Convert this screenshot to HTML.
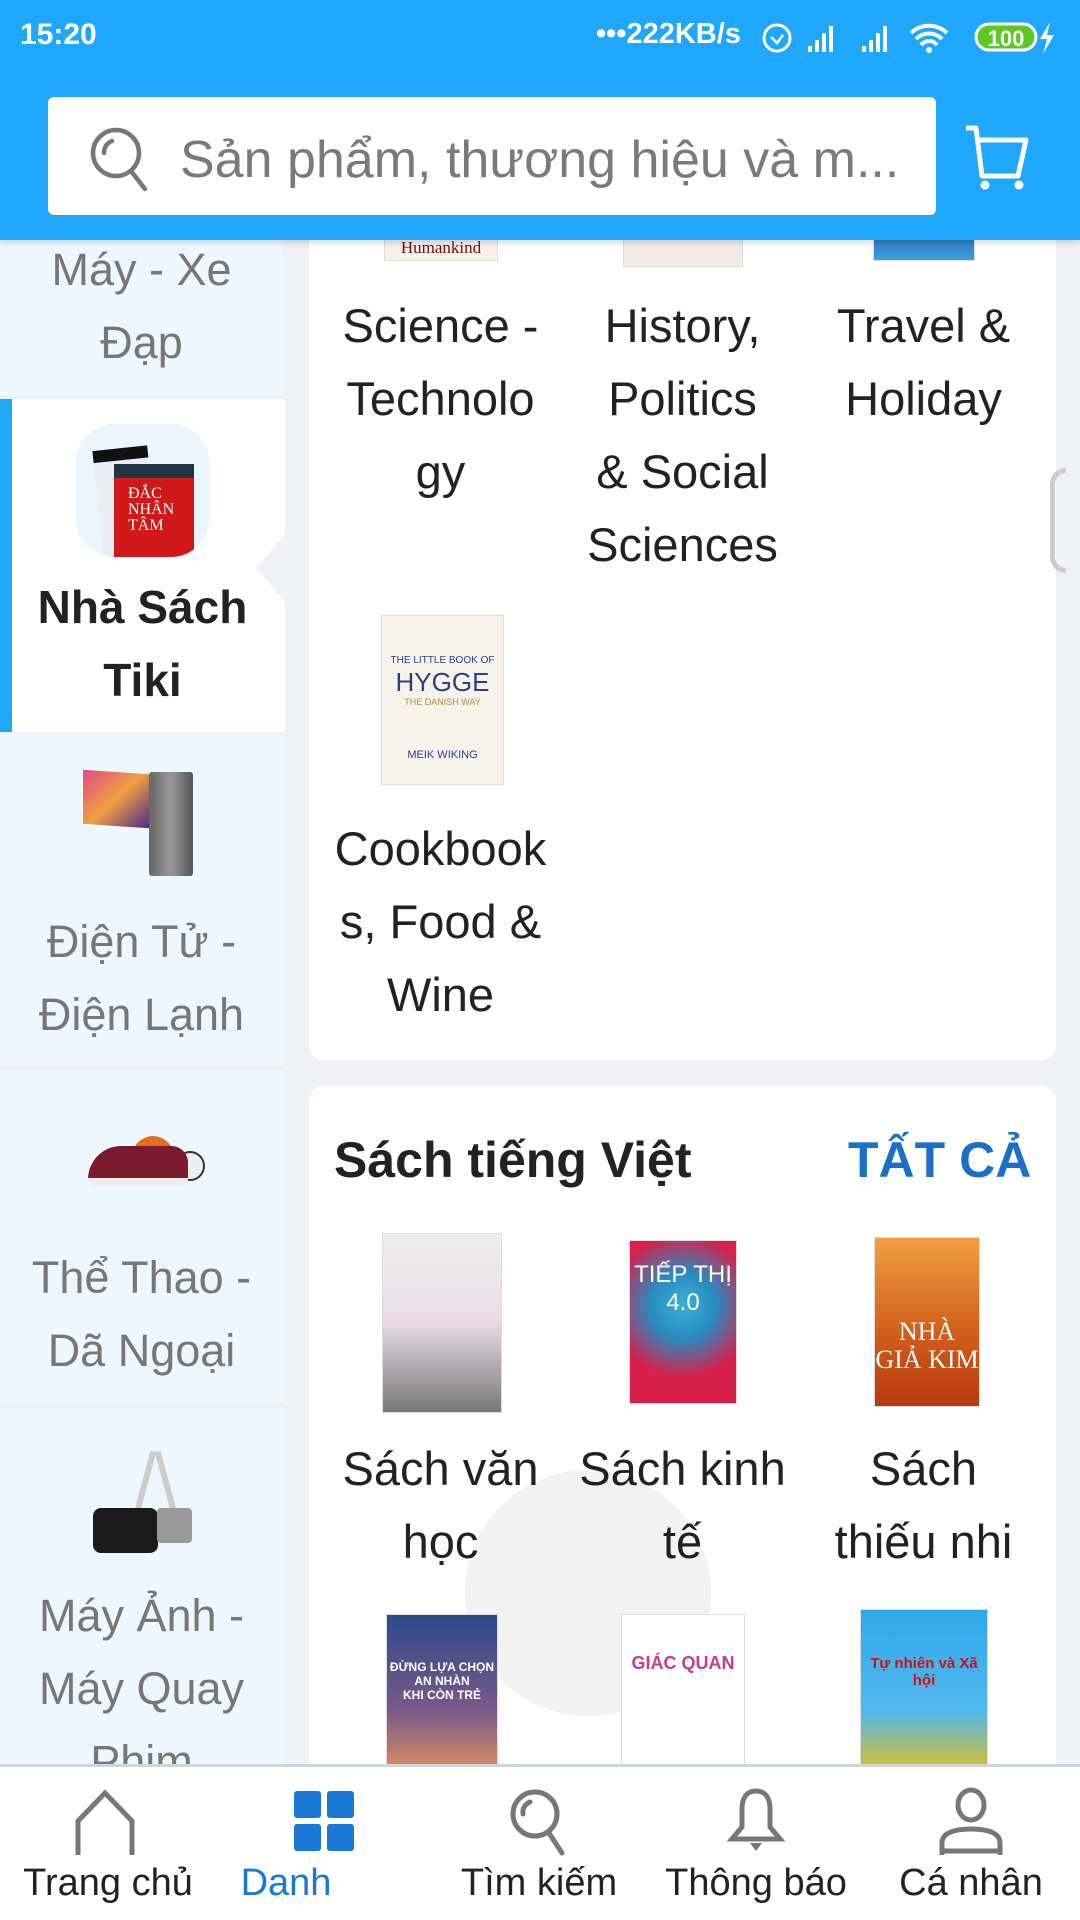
<!DOCTYPE html>
<html><head><meta charset="utf-8"><style>
*{margin:0;padding:0;box-sizing:border-box}
body{width:1080px;height:1920px;overflow:hidden;background:#f0f1f5;font-family:"Liberation Sans","Noto Sans CJK SC",sans-serif;position:relative}
.abs{position:absolute}
.side{position:absolute;left:0;width:283px;background:#edf7ff;border-bottom:3px solid #eceff2;text-align:center;color:#777;font-size:45px;line-height:73px}
.lbl{position:absolute;width:241px;text-align:center;color:#222;font-size:47px;line-height:73px}
.book{position:absolute;box-shadow:0 0 0 1px #ddd;overflow:hidden}
.nav{position:absolute;top:1862px;font-size:38px;color:#222;text-align:center;width:200px}
</style></head><body>
<!-- right content -->
<div class="abs" style="left:309px;top:200px;width:747px;height:860px;background:#fff;border-radius:0 0 14px 14px"></div>
<div class="book" style="left:385px;top:220px;width:112px;height:40px;background:#f6f1ea;font-family:'Liberation Serif';color:#6a1010;font-size:17px;text-align:center;line-height:55px">Humankind</div>
<div class="book" style="left:624px;top:220px;width:118px;height:46px;background:#f1ece4"></div>
<div class="book" style="left:874px;top:220px;width:100px;height:40px;background:linear-gradient(#2a5a9a,#3aa0e0)"></div>
<div class="lbl" style="left:320px;top:289px">Science -<br>Technolo<br>gy</div>
<div class="lbl" style="left:562px;top:289px">History,<br>Politics<br>&amp; Social<br>Sciences</div>
<div class="lbl" style="left:803px;top:289px">Travel &amp;<br>Holiday</div>
<div class="book" style="left:382px;top:616px;width:121px;height:168px;background:#f7f3ea;text-align:center;font-size:26px;color:#2a3f8a;padding-top:38px;line-height:28px"><div style="font-size:10px;line-height:14px">THE LITTLE BOOK OF</div>HYGGE<div style="font-size:9px;line-height:12px;color:#a89040">THE DANISH WAY</div><div style="margin-top:40px;font-size:11px;line-height:14px">MEIK WIKING</div></div>
<div class="lbl" style="left:320px;top:812px">Cookbook<br>s, Food &amp;<br>Wine</div>

<div class="abs" style="left:309px;top:1086px;width:747px;height:700px;background:#fff;border-radius:14px"></div>
<div class="abs" style="left:334px;top:1131px;font-size:50px;font-weight:bold;color:#222">Sách tiếng Việt</div>
<div class="abs" style="left:848px;top:1131px;font-size:50px;font-weight:bold;color:#1a6fc9">TẤT CẢ</div>
<div class="book" style="left:383px;top:1234px;width:118px;height:178px;background:linear-gradient(#eee 0%,#e8dce4 50%,#777 100%)"></div>
<div class="book" style="left:630px;top:1241px;width:106px;height:162px;background:radial-gradient(circle at 50% 40%,#3ab0d8 0%,#2a8ac0 30%,#d8204a 65%)"><div style="color:#fff;font-size:24px;text-align:center;margin-top:20px">TIẾP THỊ<br>4.0</div></div>
<div class="book" style="left:875px;top:1238px;width:104px;height:168px;background:linear-gradient(#f0a040,#d05a1a 60%,#b83a10);color:#fff;font-family:'Liberation Serif';text-align:center;font-size:26px;padding-top:80px;line-height:28px">NHÀ<br>GIẢ KIM</div>
<div class="lbl" style="left:320px;top:1432px">Sách văn<br>học</div>
<div class="lbl" style="left:562px;top:1432px">Sách kinh<br>tế</div>
<div class="lbl" style="left:803px;top:1432px">Sách<br>thiếu nhi</div>
<div class="abs" style="left:465px;top:1470px;width:246px;height:246px;border-radius:50%;background:rgba(0,0,0,0.05)"></div>
<div class="book" style="left:387px;top:1615px;width:110px;height:160px;background:linear-gradient(#2d4a8a,#7a5a8a 60%,#e0905a);color:#fff;font-size:12px;font-weight:bold;text-align:center;padding-top:45px">ĐỪNG LỰA CHỌN<br>AN NHÀN<br>KHI CÒN TRẺ</div>
<div class="book" style="left:622px;top:1615px;width:122px;height:160px;background:#fff;text-align:center;font-size:18px;color:#c83a8a;padding-top:38px;font-weight:bold">GIÁC QUAN</div>
<div class="book" style="left:861px;top:1610px;width:126px;height:165px;background:linear-gradient(#30a8e8,#50b8f0 60%,#e0c020);text-align:center;font-size:15px;color:#d01010;font-weight:bold;padding-top:45px">Tự nhiên và Xã hội</div>
<div class="abs" style="left:1050px;top:468px;width:16px;height:105px;border:5px solid #ccc;border-right:none;border-radius:16px 0 0 16px"></div>

<!-- sidebar -->
<div class="side" style="top:240px;height:159px"><div style="position:absolute;top:-7px;width:100%">Máy - Xe<br>Đạp</div></div>
<div class="abs" style="left:0;top:399px;width:285px;height:333px;background:#fff"></div>
<div class="abs" style="left:0;top:399px;width:12px;height:333px;background:#1ea7fd"></div>
<div class="abs" style="left:76px;top:424px;width:133px;height:133px;border-radius:38px;background:#eaf5ff;overflow:hidden">
 <div class="abs" style="left:22px;top:24px;width:55px;height:110px;background:#e8eef4;border-top:12px solid #111;transform:rotate(-6deg)"></div>
 <div class="abs" style="left:38px;top:40px;width:80px;height:100px;background:#d01818;border-top:14px solid #234"><div style="color:#fff;font-family:'Liberation Serif';font-size:16px;line-height:16px;padding:8px 0 0 14px">ĐẮC<br>NHÂN<br>TÂM</div></div>
</div>
<div class="abs" style="left:0;top:571px;width:285px;text-align:center;font-size:46px;font-weight:bold;color:#222;line-height:73px">Nhà Sách<br>Tiki</div>
<div class="abs" style="left:256px;top:533px;width:0;height:0;border-top:35px solid transparent;border-bottom:35px solid transparent;border-right:30px solid #f0f1f5"></div>
<div class="side" style="top:734px;height:335px">
 <div class="abs" style="left:83px;top:38px;width:66px;height:54px;background:linear-gradient(135deg,#e04a8a,#f0a040,#4a2a8a);transform:skewY(4deg)"></div>
 <div class="abs" style="left:149px;top:38px;width:44px;height:104px;background:linear-gradient(90deg,#666,#999,#555);border-radius:3px"></div>
 <div class="abs" style="top:171px;width:100%">Điện Tử -<br>Điện Lạnh</div>
</div>
<div class="side" style="top:1071px;height:335px">
 <div class="abs" style="left:132px;top:65px;width:42px;height:42px;border-radius:50%;background:#e07020"></div>
 <div class="abs" style="left:175px;top:80px;width:30px;height:30px;border-radius:50%;background:#eee;border:2px solid #333"></div>
 <div class="abs" style="left:88px;top:75px;width:100px;height:40px;background:#7a1a2a;border-radius:40px 20px 8px 8px;border-bottom:8px solid #eee"></div>
 <div class="abs" style="top:170px;width:100%">Thể Thao -<br>Dã Ngoại</div>
</div>
<div class="side" style="top:1408px;height:360px;border:none">
 <div class="abs" style="left:140px;top:42px;width:6px;height:80px;background:#ccc;transform:rotate(15deg)"></div>
 <div class="abs" style="left:165px;top:42px;width:6px;height:80px;background:#ccc;transform:rotate(-15deg)"></div>
 <div class="abs" style="left:93px;top:100px;width:65px;height:45px;background:#1a1a1a;border-radius:8px"></div>
 <div class="abs" style="left:157px;top:100px;width:35px;height:35px;background:#999;border-radius:4px"></div>
 <div class="abs" style="top:171px;width:100%">Máy Ảnh -<br>Máy Quay<br>Phim</div>
</div>

<!-- header -->
<div class="abs" style="left:0;top:0;width:1080px;height:240px;background:#1ea7fd;box-shadow:0 3px 6px rgba(0,0,0,.15)"></div>
<div class="abs" style="left:20px;top:18px;color:#fff;font-size:30px;font-weight:bold">15:20</div>
<div class="abs" style="left:596px;top:18px;color:#fff;font-size:29px;font-weight:bold">•••222KB/s</div>
<svg class="abs" style="left:758px;top:16px" width="300" height="40" viewBox="0 0 300 40">
 <circle cx="19" cy="22" r="13" fill="none" stroke="#fff" stroke-width="3"/><path d="M13 21l6 6 6-8" fill="none" stroke="#fff" stroke-width="2.5"/>
 <g fill="#fff"><rect x="50" y="30" width="4" height="6"/><rect x="57" y="24" width="4" height="12"/><rect x="64" y="17" width="4" height="19"/><rect x="71" y="10" width="4" height="26"/>
 <rect x="104" y="30" width="4" height="6"/><rect x="111" y="24" width="4" height="12"/><rect x="118" y="17" width="4" height="19"/><rect x="125" y="10" width="4" height="26"/></g>
 <path d="M153 17a26 26 0 0 1 36 0M158 23a18 18 0 0 1 26 0M163 29a10 10 0 0 1 16 0" fill="none" stroke="#fff" stroke-width="4"/><circle cx="171" cy="34" r="3" fill="#fff"/>
 <rect x="218" y="8" width="60" height="26" rx="13" fill="#5cc823" stroke="#fff" stroke-width="3"/>
 <text x="248" y="30" font-size="22" font-weight="bold" fill="#fff" text-anchor="middle" font-family="Liberation Sans">100</text>
 <path d="M292 6l-10 17h7l-4 15 11-19h-7z" fill="#fff"/>
</svg>
<div class="abs" style="left:48px;top:97px;width:888px;height:118px;background:#fff;border-radius:6px"></div>
<svg class="abs" style="left:88px;top:125px" width="64" height="68" viewBox="0 0 64 68"><circle cx="28" cy="28" r="23" fill="none" stroke="#777" stroke-width="4.5"/><path d="M43 46l14 18M16 28a12 12 0 0 1 8-12" fill="none" stroke="#777" stroke-width="4.5" stroke-linecap="round"/></svg>
<div class="abs" style="left:180px;top:130px;font-size:52px;color:#7a7a7a;white-space:nowrap">Sản phẩm, thương hiệu và m...</div>
<svg class="abs" style="left:962px;top:122px" width="70" height="70" viewBox="0 0 70 70"><path d="M4 6h10l6 48h36l8-36H17" fill="none" stroke="#fff" stroke-width="5" stroke-linejoin="round"/><circle cx="23" cy="63" r="4.5" fill="#fff"/><circle cx="57" cy="63" r="4.5" fill="#fff"/></svg>

<!-- bottom nav -->
<div class="abs" style="left:0;top:1764px;width:1080px;height:156px;background:#fff;border-top:3px solid #cfd5dc"></div>
<svg class="abs" style="left:70px;top:1787px" width="70" height="70" viewBox="0 0 70 70"><path d="M8 68V34L35 6l27 28v34" fill="none" stroke="#777" stroke-width="5"/></svg>
<svg class="abs" style="left:292px;top:1789px" width="64" height="64"><rect x="2" y="2" width="27" height="27" rx="3" fill="#1a78d4"/><rect x="35" y="2" width="27" height="27" rx="3" fill="#1a78d4"/><rect x="2" y="35" width="27" height="27" rx="3" fill="#1a78d4"/><rect x="35" y="35" width="27" height="27" rx="3" fill="#1a78d4"/></svg>
<svg class="abs" style="left:505px;top:1787px" width="70" height="70" viewBox="0 0 70 70"><circle cx="30" cy="27" r="22" fill="none" stroke="#777" stroke-width="5"/><path d="M44 46l13 20M18 27a11 11 0 0 1 7-12" fill="none" stroke="#777" stroke-width="5" stroke-linecap="round"/></svg>
<svg class="abs" style="left:726px;top:1787px" width="60" height="70" viewBox="0 0 60 70"><path d="M30 4c-10 0-14 8-14 18v18L6 52h48L44 40V22c0-10-4-18-14-18z" fill="none" stroke="#777" stroke-width="5"/><path d="M24 56h12l-6 8z" fill="#777"/></svg>
<svg class="abs" style="left:938px;top:1787px" width="66" height="70" viewBox="0 0 66 70"><ellipse cx="33" cy="18" rx="13" ry="15" fill="none" stroke="#777" stroke-width="5"/><path d="M4 68V56c0-10 12-14 29-14s29 4 29 14v12M4 64h58" fill="none" stroke="#777" stroke-width="5"/></svg>
<div class="nav" style="left:8px">Trang chủ</div>
<div class="nav" style="left:186px;color:#1a78d4">Danh</div>
<div class="nav" style="left:439px">Tìm kiếm</div>
<div class="nav" style="left:656px">Thông báo</div>
<div class="nav" style="left:871px">Cá nhân</div>
</body></html>
